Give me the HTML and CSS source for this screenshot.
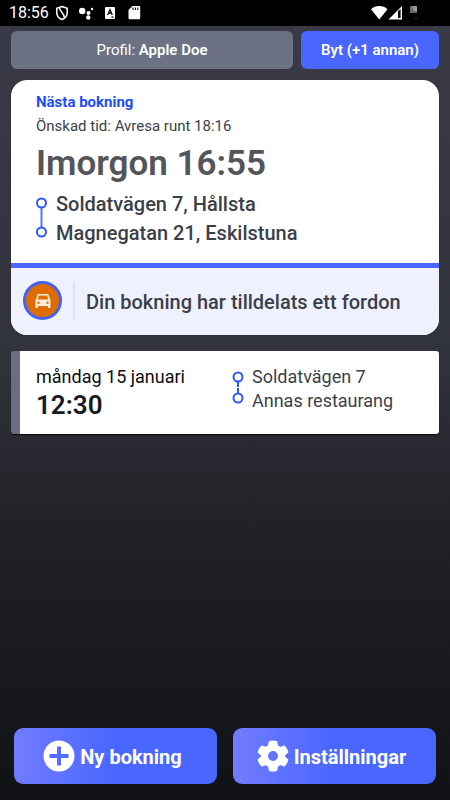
FILE: index.html
```html
<!DOCTYPE html>
<html lang="sv">
<head>
<meta charset="utf-8">
<meta name="viewport" content="width=device-width, initial-scale=1">
<title>Bokningar</title>
<link rel="stylesheet" href="styles.css">
</head>
<body>
<div class="app">
  <header class="status">
    <span class="clock">18:56</span>
    <svg class="status-left" width="88" height="18" viewBox="0 0 88 18" aria-hidden="true">
      <path d="M7 2.500 12.200 4.200V9c0 3-2 5.300-5.200 6.500C3.800 14.300 1.800 12 1.800 9V4.200Z" fill="none" stroke="#fff" stroke-width="1.500"/>
      <path d="M4.500 3.500C4.500 8 9.500 8.500 9.500 14" fill="none" stroke="#fff" stroke-width="1.500"/>
      <circle cx="27.200" cy="7" r="3.200" fill="#fff"/>
      <circle cx="33.500" cy="9" r="2" fill="#fff"/>
      <circle cx="33.300" cy="13.500" r="2.200" fill="#fff"/>
      <circle cx="37" cy="5" r="1.200" fill="#fff"/>
      <rect x="50" y="3" width="10" height="12" rx="1" fill="#fff"/>
      <path d="m52.700 11 2.300-5.500 2.300 5.500M53.500 9.200h3M56.500 13.200h2" fill="none" stroke="#000" stroke-width="1.200"/>
      <path d="M77.500 2H84a1.200 1.200 0 0 1 1.200 1.200V14a1.200 1.200 0 0 1-1.200 1.200h-9.300A1.200 1.200 0 0 1 73.500 14V6Z" fill="#fff"/>
      <path d="M78 3.500V6M80.400 3.500V6M82.800 3.500V6" stroke="#000" stroke-width="1.100"/>
    </svg>
    <svg class="status-right" width="48" height="18" viewBox="0 0 48 18" aria-hidden="true">
      <path d="M0 5.200C4.500.800 12 .800 16.500 5.200L8.250 15.500Z" fill="#fff"/>
      <path d="M17.500 15.500 31 2v13.500Z" fill="#fff"/>
      <path d="M27 7.200 29.600 5v9H27Z" fill="#000"/>
      <path d="M39 2h7v7h-7Z" fill="#666"/>
      <path d="M41 2h5v5h-3Z" fill="#999"/>
      <path d="M44 14h2v1h-2Z" fill="#333"/>
    </svg>
  </header>

  <main class="content">
    <div class="profile">
      <button type="button" class="profile-name">Profil:&nbsp;<b>Apple Doe</b></button>
      <button type="button" class="profile-switch">Byt (+1 annan)</button>
    </div>

    <article class="next">
      <div class="next-body">
        <h2 class="next-label">Nästa bokning</h2>
        <p class="next-wish">Önskad tid: Avresa runt 18:16</p>
        <p class="next-time">Imorgon 16:55</p>
        <div class="route">
          <svg width="11" height="42" viewBox="0 0 11 42" fill="none" stroke="#2c58fb" stroke-width="2" aria-hidden="true">
            <circle cx="5.500" cy="6" r="4.500"/><circle cx="5.500" cy="35" r="4.500"/><path d="M5.500 11v19" stroke-opacity=".8"/>
          </svg>
          <div><p>Soldatvägen 7, Hållsta</p><p>Magnegatan 21, Eskilstuna</p></div>
        </div>
      </div>
      <div class="next-status">
        <span class="vehicle">
          <svg width="16" height="16" viewBox="0 0 16 16" aria-hidden="true">
            <path fill="#ffeddf" fill-rule="evenodd" d="M3.600 1h8.800c.6 0 1 .3 1.200.900L15.500 7.500V14.300c0 .4-.3.700-.7.700h-1.100c-.4 0-.7-.3-.7-.7V13H3v1.300c0 .4-.3.700-.7.700H1.200c-.4 0-.7-.3-.7-.7V7.500L2.400 1.900c.2-.6.600-.9 1.200-.900ZM3.900 2.500 2.600 6.500h10.800L12.100 2.500ZM3.500 8.600a1.200 1.200 0 1 0 0 2.400 1.200 1.200 0 0 0 0-2.400Zm9 0a1.200 1.200 0 1 0 0 2.400 1.200 1.200 0 0 0 0-2.400Z"/>
          </svg>
        </span>
        <p class="next-message">Din bokning har tilldelats ett fordon</p>
      </div>
    </article>

    <article class="booking">
      <div>
        <p class="booking-date">måndag 15 januari</p>
        <p class="booking-time">12:30</p>
      </div>
      <div class="booking-route">
        <svg width="12" height="34" viewBox="0 0 12 34" fill="none" stroke="#2c58fb" stroke-width="2" aria-hidden="true">
          <circle cx="6" cy="6" r="4.500"/><circle cx="6" cy="27" r="4.500"/><path d="M6 11v5M6 17v5"/>
        </svg>
        <div><p>Soldatvägen 7</p><p>Annas restaurang</p></div>
      </div>
    </article>
  </main>

  <nav class="actions">
    <button type="button" class="action">
      <svg width="32" height="32" viewBox="0 0 32 32" aria-hidden="true"><circle cx="16" cy="16" r="15.500" fill="#fff"/><path d="M16 6.500v19M6.500 16h19" stroke="#566cff" stroke-width="4"/></svg>
      <span>Ny bokning</span>
    </button>
    <button type="button" class="action">
      <svg width="32" height="32" viewBox="0 0 32 32" aria-hidden="true"><path fill="#fff" fill-rule="evenodd" stroke="#fff" stroke-width="1.500" stroke-linejoin="round" d="M12.500 1.800Q16 .800 19.500 1.800L20.300 6 23.200 7.700 27.200 6.300Q29.700 8.900 30.600 12.300L27.400 15V17L30.600 19.700Q29.700 23.100 27.200 25.700L23.200 24.300 20.300 26 19.500 30.200Q16 31.200 12.500 30.200L11.700 26 8.800 24.300 4.800 25.700Q2.300 23.100 1.400 19.700L4.600 17V15L1.400 12.300Q2.300 8.900 4.800 6.300L8.800 7.700 11.700 6ZM16 10.300a5.700 5.700 0 1 0 0 11.400 5.700 5.700 0 0 0 0-11.400Z"/></svg>
      <span>Inställningar</span>
    </button>
  </nav>
</div>
</body>
</html>
```
FILE: styles.css
```css
* { box-sizing: border-box; }

body,
p,
h2 { margin: 0; }

body {
  font-family: Roboto, "Liberation Sans", sans-serif;
  color: #3b3f4a;
}

svg {
  display: block;
  flex: none;
}

button {
  border: 0;
  font: inherit;
  color: #fff;
  display: flex;
  align-items: center;
  justify-content: center;
}

.app {
  min-height: 100vh;
  display: flex;
  flex-direction: column;
  background: linear-gradient(#393a46 4%, #30323c 45%, #202125 67%, #111216 100%);
}

.status {
  height: 26px;
  padding: 0 31px 0 9px;
  display: flex;
  align-items: center;
  background: #000;
  color: #fff;
}

.clock {
  font-size: 16px;
  line-height: 28px;
}

.status-left { margin-left: 6px; }

.status-right { margin-left: auto; }

.content {
  flex: 1;
  padding: 5px 11px 0;
}

.profile {
  display: grid;
  grid-template-columns: 282fr 138fr;
  gap: 8px;
}

.profile button {
  height: 38px;
  padding: 0;
  border-radius: 6px;
  font-size: 15px;
}

.profile-name { background: #6c7184; }

.profile-name b { font-weight: 600; }

.profile .profile-switch {
  background: #4966ff;
  font-weight: 600;
}

.next {
  margin-top: 11px;
  border-radius: 16px;
  overflow: hidden;
  background: #fff;
  box-shadow: 0 0 1px #15161c;
}

.next-body { padding: 11px 25px 15px; }

.next-label {
  font-size: 15px;
  line-height: 23px;
  font-weight: 700;
  color: #1d4cf7;
}

.next-wish {
  font-size: 15px;
  line-height: 24px;
}

.next-time {
  font-size: 35px;
  line-height: 52px;
  font-weight: 600;
  color: #53555b;
}

.route {
  display: flex;
  gap: 9px;
  font-size: 20px;
  line-height: 29px;
  font-weight: 500;
}

.route svg { margin-top: 7px; }

.next-status {
  border-top: 5px solid #4966ff;
  padding: 13px 12px 15px;
  display: flex;
  align-items: center;
  gap: 11px;
  background: #eff1ff;
}

.vehicle {
  width: 39px;
  height: 39px;
  border: 3px solid #4261f5;
  border-radius: 50%;
  display: grid;
  place-items: center;
  background: #e06c00;
}

.next-message {
  border-left: 2px solid #dfe1e8;
  padding: 4px 0 0 11px;
  font-size: 20px;
  line-height: 35px;
  font-weight: 500;
}

.booking {
  margin-top: 16px;
  padding: 14px 16px 12px;
  border-left: 9px solid #6b6d87;
  border-radius: 3px;
  display: grid;
  grid-template-columns: 196fr 191fr;
  background: #fff;
  box-shadow: 0 1px 1px #08090c;
}

.booking-date {
  font-size: 18px;
  line-height: 24px;
  color: #0c0d12;
}

.booking-time {
  font-size: 26px;
  line-height: 33px;
  font-weight: 600;
  color: #171a23;
}

.booking-route {
  display: flex;
  gap: 8px;
  font-size: 18px;
  line-height: 24px;
}

.booking-route svg { margin-top: 6px; }

.actions {
  padding: 0 14px 16px;
  display: grid;
  grid-template-columns: 1fr 1fr;
  gap: 16px;
}

.action {
  height: 56px;
  padding: 0 6px 0 0;
  gap: 5px;
  border-radius: 9px;
  background: linear-gradient(90deg, #717cff, #4966ff 50%);
  font-size: 20px;
  font-weight: 700;
}

.action span { padding-top: 2px; }
```
